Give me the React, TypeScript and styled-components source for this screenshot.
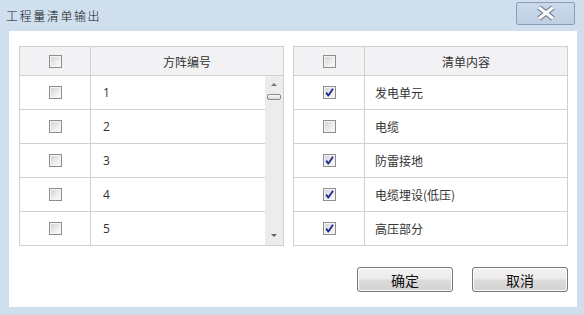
import React from "react";
import styled, { createGlobalStyle } from "styled-components";

const Global = createGlobalStyle`
  html, body { margin: 0; padding: 0; }
  body {
    background: #cfdfee;
    font-family: "Noto Sans CJK SC", "Noto Sans", sans-serif;
    width: 584px;
    height: 315px;
    overflow: hidden;
  }
`;

const Dialog = styled.div`
  width: 584px;
  height: 315px;
  display: flex;
  flex-direction: column;
  background: #cfdfee;
`;

const TitleBar = styled.div`
  height: 31px;
  display: flex;
  align-items: center;
  justify-content: space-between;
  padding: 0 9px 0 6px;
  box-sizing: border-box;
`;

const Title = styled.div`
  font-family: "Noto Sans CJK SC", sans-serif;
  font-size: 12px;
  letter-spacing: 1.6px;
  color: #111;
  font-weight: 300;
  margin-top: -1px;
`;

const CloseButton = styled.div`
  width: 59px;
  height: 23px;
  box-sizing: border-box;
  margin-top: -5px;
  border: 1px solid #8d9db7;
  border-radius: 2px;
  background: linear-gradient(#cad9ea, #c0d0e4);
  display: flex;
  align-items: center;
  justify-content: center;
`;

const Panel = styled.div`
  margin-left: 9px;
  width: 568px;
  height: 276px;
  background: #fff;
  box-sizing: border-box;
  padding: 15px 9px 0 10px;
  display: flex;
  flex-direction: column;
`;

const Tables = styled.div`
  display: flex;
  gap: 9px;
`;

const Table = styled.div<{ $w: number }>`
  width: ${(p) => p.$w}px;
  box-sizing: border-box;
  border: 1px solid #d0d0d0;
  display: flex;
  flex-direction: column;
`;

const HeaderRow = styled.div`
  height: 29px;
  box-sizing: border-box;
  border-bottom: 1px solid #d0d0d0;
  background: #f2f2f4;
  display: grid;
  grid-template-columns: 71px 1fr;
`;

const CheckCell = styled.div`
  border-right: 1px solid #d0d0d0;
  display: flex;
  align-items: center;
  justify-content: center;
`;

const HeaderText = styled.div`
  display: flex;
  align-items: center;
  justify-content: center;
  font-size: 12px;
  color: #333;
`;

const Body = styled.div`
  display: flex;
`;

const Rows = styled.div`
  flex: 1;
  display: flex;
  flex-direction: column;
`;

const Row = styled.div`
  height: 34px;
  box-sizing: border-box;
  border-bottom: 1px solid #d0d0d0;
  display: grid;
  grid-template-columns: 71px 1fr;
  &:last-child {
    height: 33px;
    border-bottom: none;
  }
`;

const CellText = styled.div<{ $num?: boolean }>`
  display: flex;
  align-items: center;
  padding-left: ${(p) => (p.$num ? 12 : 10)}px;
  font-family: ${(p) =>
    p.$num ? '"Open Sans", "Noto Sans", sans-serif' : '"Noto Sans CJK SC", sans-serif'};
  font-size: 12px;
  color: #333;
`;

const ScrollTrack = styled.div`
  width: 18px;
  background: #ececec;
  display: flex;
  flex-direction: column;
  align-items: center;
`;

const Arrow = styled.div<{ $down?: boolean }>`
  width: 0;
  height: 0;
  border-left: 3px solid transparent;
  border-right: 3px solid transparent;
  ${(p) =>
    p.$down
      ? "border-top: 3px solid #666; margin-top: auto; margin-bottom: 8px;"
      : "border-bottom: 3px solid #777; margin-top: 7px;"}
`;

const Thumb = styled.div`
  width: 14px;
  height: 6px;
  box-sizing: border-box;
  margin-top: 8px;
  border: 1px solid #8a8a8a;
  border-radius: 2px;
  background: linear-gradient(#fafafa, #d8d8d8);
`;

const Box = styled.div`
  width: 13px;
  height: 13px;
  box-sizing: border-box;
  border: 1px solid #8e8e8e;
  box-shadow: inset 0 0 0 1px #f4f4f4;
  background: linear-gradient(135deg, #cfd0d6 0%, #eeeef0 60%, #fbfbfb 100%);
  display: flex;
  align-items: center;
  justify-content: center;
`;

const Footer = styled.div`
  display: flex;
  justify-content: flex-end;
  gap: 19px;
  margin-top: 21px;
`;

const Button = styled.div`
  width: 96px;
  height: 25px;
  box-sizing: border-box;
  border: 1px solid #777;
  border-radius: 3px;
  background: linear-gradient(#f3f3f3 0%, #ebebeb 48%, #dcdcdc 52%, #d2d2d2 100%);
  box-shadow: inset 0 0 0 1px #fcfcfc;
  display: flex;
  align-items: center;
  justify-content: center;
  font-size: 14px;
  color: #111;
`;

const Check = ({ checked }: { checked?: boolean }) => (
  <Box>
    {checked && (
      <svg width="9" height="9" viewBox="0 0 9 9">
        <path d="M1.2 4.6 L3.4 7.6 L8 0.8" fill="none" stroke="#1f2a8c" strokeWidth="1.8" strokeLinejoin="round" />
      </svg>
    )}
  </Box>
);

const leftRows = ["1", "2", "3", "4", "5"];
const rightRows = [
  { t: "发电单元", c: true },
  { t: "电缆", c: false },
  { t: "防雷接地", c: true },
  { t: "电缆埋设(低压)", c: true },
  { t: "高压部分", c: true },
];

export default function App() {
  return (
    <>
      <Global />
      <Dialog>
        <TitleBar>
          <Title>工程量清单输出</Title>
          <CloseButton>
            <svg width="22" height="16" viewBox="0 0 22 16">
              <path d="M4 2.5 L18 13.5 M18 2.5 L4 13.5" stroke="#6a7484" strokeWidth="5.4" strokeLinecap="butt" />
              <path d="M4 2.5 L18 13.5 M18 2.5 L4 13.5" stroke="#fbfbfb" strokeWidth="3.2" strokeLinecap="butt" />
            </svg>
          </CloseButton>
        </TitleBar>
        <Panel>
          <Tables>
            <Table $w={265}>
              <HeaderRow>
                <CheckCell>
                  <Check />
                </CheckCell>
                <HeaderText>方阵编号</HeaderText>
              </HeaderRow>
              <Body>
                <Rows>
                  {leftRows.map((r) => (
                    <Row key={r}>
                      <CheckCell>
                        <Check />
                      </CheckCell>
                      <CellText $num>{r}</CellText>
                    </Row>
                  ))}
                </Rows>
                <ScrollTrack>
                  <Arrow />
                  <Thumb />
                  <Arrow $down />
                </ScrollTrack>
              </Body>
            </Table>
            <Table $w={275}>
              <HeaderRow>
                <CheckCell>
                  <Check />
                </CheckCell>
                <HeaderText>清单内容</HeaderText>
              </HeaderRow>
              <Rows>
                {rightRows.map((r) => (
                  <Row key={r.t}>
                    <CheckCell>
                      <Check checked={r.c} />
                    </CheckCell>
                    <CellText>{r.t}</CellText>
                  </Row>
                ))}
              </Rows>
            </Table>
          </Tables>
          <Footer>
            <Button>确定</Button>
            <Button>取消</Button>
          </Footer>
        </Panel>
      </Dialog>
    </>
  );
}
